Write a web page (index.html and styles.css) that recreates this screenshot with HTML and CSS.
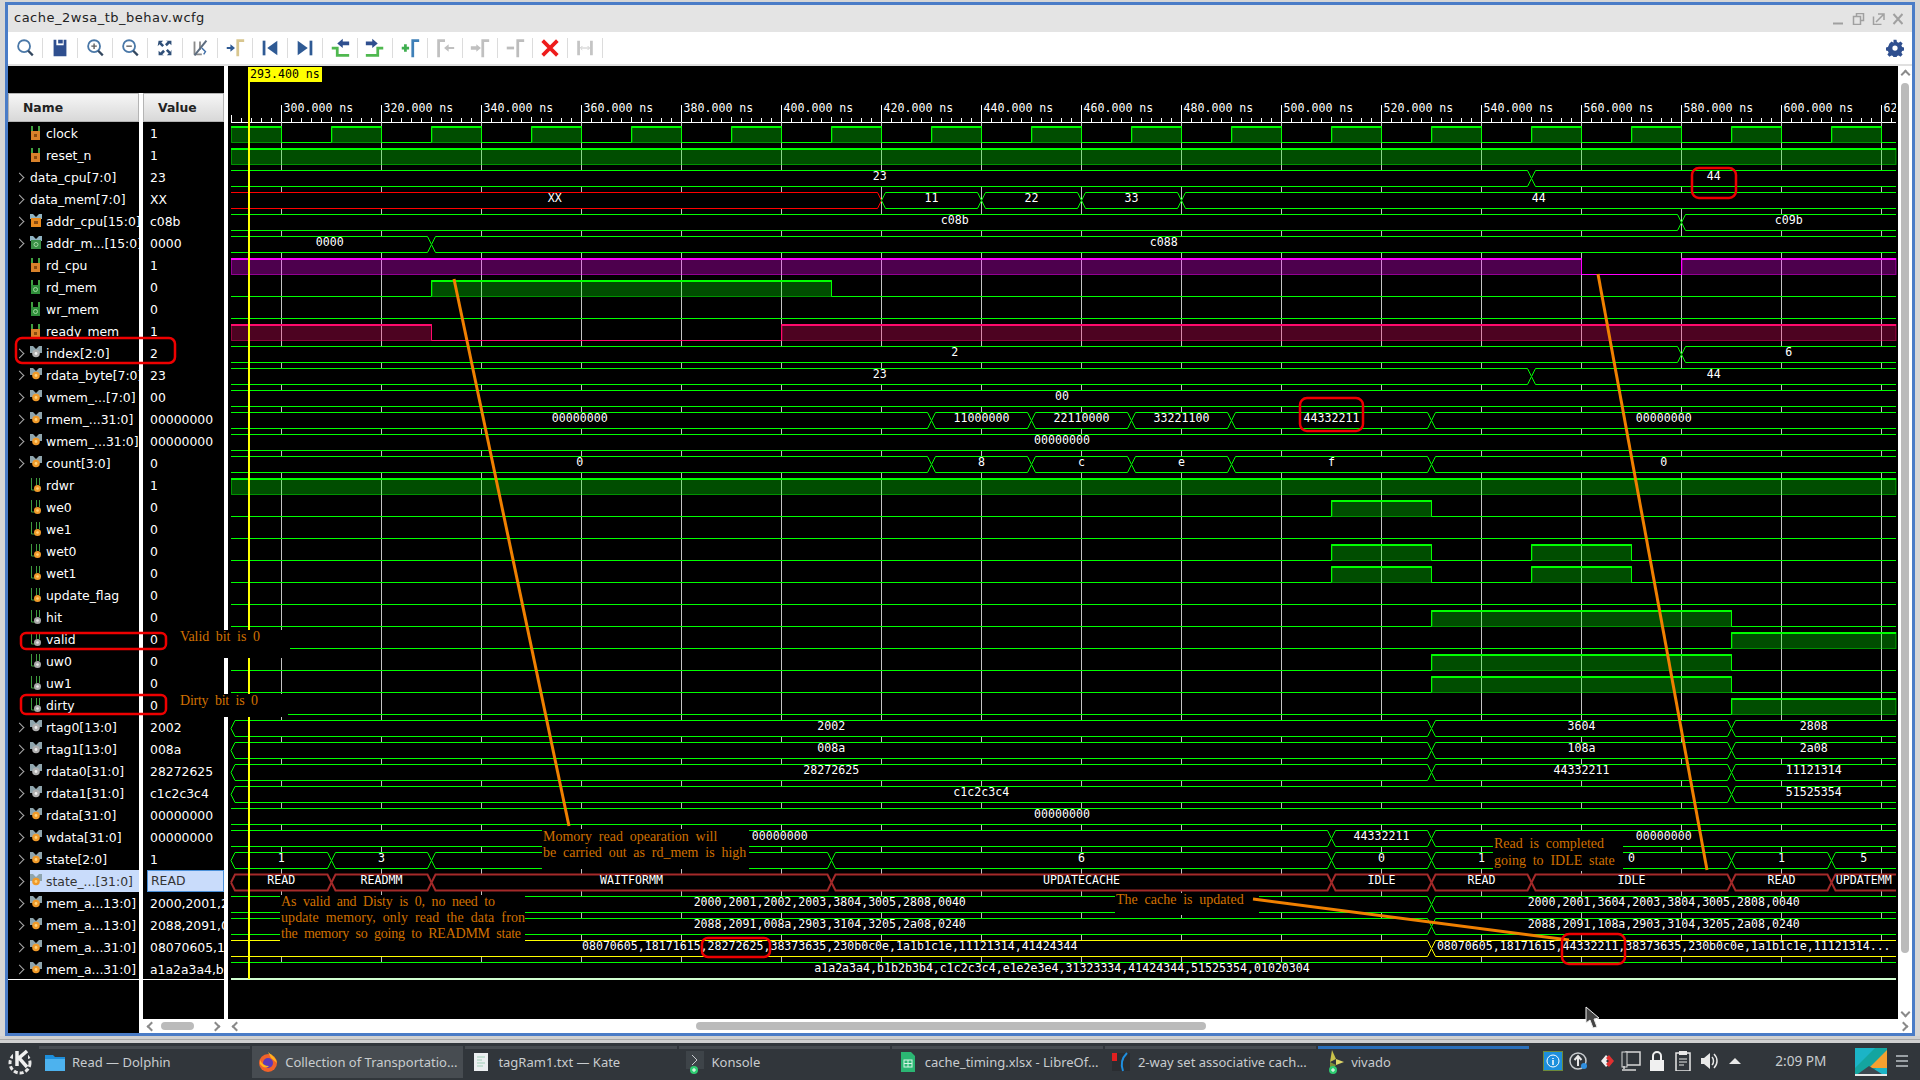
FILE: index.html
```html
<!DOCTYPE html>
<html lang="en">
<head>
    <meta charset="UTF-8">
    <title>cache_2wsa_tb_behav.wcfg</title>
    <link rel="stylesheet" href="styles.css">
</head>
<body>
    <svg class="defs" width="0" height="0">
        <!-- signal icons -->
        <symbol id="logic-in" viewBox="0 0 12 16"><path d="M2 1v6M9 1v6" stroke="#3fa03f" stroke-width="2" fill="none"/><rect x="1" y="6" width="9" height="9" fill="#d9822b"/><rect x="4" y="9" width="3" height="3" fill="#8a4b10"/></symbol>
        <symbol id="logic-out" viewBox="0 0 12 16"><path d="M2 1v6M9 1v6" stroke="#3fa03f" stroke-width="2" fill="none"/><rect x="1" y="6" width="9" height="9" fill="#2f8f3a"/><circle cx="5.500" cy="10.500" r="2" fill="none" stroke="#9fd89f"/></symbol>
        <symbol id="logic-int" viewBox="0 0 12 16"><path d="M1.500 1v12H5M6.500 1v7M9.500 1v7" stroke="#3f9a3f" fill="none"/><circle cx="7.500" cy="11.500" r="3.500" fill="#f09a2a"/><circle cx="7.500" cy="11.500" r="1.300" fill="#ffd27a"/></symbol>
        <symbol id="logic-gray" viewBox="0 0 12 16"><path d="M1.500 1v12H5M6.500 1v7M9.500 1v7" stroke="#3f9a3f" fill="none"/><circle cx="7.500" cy="11.500" r="3.500" fill="#a8a8a8"/><circle cx="7.500" cy="11.500" r="1.300" fill="#e8e8e8"/></symbol>
        <symbol id="bus-in" viewBox="0 0 12 16"><path d="M0 1h3l3 3 3-3h3v5H0z" fill="#8fb3c2"/><rect x="1" y="5" width="10" height="9" fill="#e88a1e"/><rect x="4" y="8" width="4" height="3" fill="#8a4b10"/></symbol>
        <symbol id="bus-out" viewBox="0 0 12 16"><path d="M0 1h3l3 3 3-3h3v5H0z" fill="#8fb3c2"/><rect x="1" y="5" width="10" height="9" fill="#3a8f46"/><circle cx="6" cy="9.500" r="2" fill="none" stroke="#9fd89f"/></symbol>
        <symbol id="bus-int" viewBox="0 0 12 16"><path d="M0 1h3l3 3 3-3h3v7H0z" fill="#8fa5ad"/><circle cx="6" cy="8.500" r="3.800" fill="#f09a2a"/><circle cx="6" cy="8.500" r="1.400" fill="#ffd27a"/></symbol>
        <symbol id="bus-gray" viewBox="0 0 12 16"><path d="M0 1h3l3 3 3-3h3v7H0z" fill="#8fa5ad"/><circle cx="6" cy="8.500" r="3.800" fill="#b0b0b0"/><circle cx="6" cy="8.500" r="1.400" fill="#eee"/></symbol>
    </svg>

    <div class="window">
        <div class="titlebar">
            <span class="title">cache_2wsa_tb_behav.wcfg</span>
            <div class="winbtns">
                <svg width="70" height="12" viewBox="0 0 70 12">
                    <path d="M0 10.500h10" stroke="#a0a0a0" stroke-width="2"/>
                    <path d="M20.500 3.500h7v8h-7zM23.500 3V.5h7v7H28" fill="none" stroke="#a0a0a0" stroke-width="1.500"/>
                    <path d="M40.500 3.500v8h8M43 9l7-7M45 1h6v6" fill="none" stroke="#a0a0a0" stroke-width="1.500"/>
                    <path d="M60.500 1l9 10M69.500 1l-9 10" fill="none" stroke="#a0a0a0" stroke-width="2"/>
                </svg>
            </div>
        </div>

        <div class="toolbar">
            <div class="tool"><svg viewBox="0 0 24 24"><circle cx="11" cy="10" r="6.500" fill="none" stroke="#4a78a8" stroke-width="2"/><path d="M15.500 15l5 5" stroke="#33475f" stroke-width="2.500"/></svg></div>
            <div class="tool"><svg viewBox="0 0 24 24"><path d="M5 3h3v6h8V3h3v18H5z" fill="#2f4f8f"/><rect x="10" y="3" width="5" height="4" fill="#2f4f8f"/></svg></div>
            <div class="tool"><svg viewBox="0 0 24 24"><circle cx="11" cy="10" r="6.500" fill="none" stroke="#4a78a8" stroke-width="2"/><path d="M15.500 15l5 5" stroke="#33475f" stroke-width="2.500"/><path d="M8 10h6M11 7v6" stroke="#5f5f5f" stroke-width="1.500"/></svg></div>
            <div class="tool"><svg viewBox="0 0 24 24"><circle cx="11" cy="10" r="6.500" fill="none" stroke="#4a78a8" stroke-width="2"/><path d="M15.500 15l5 5" stroke="#33475f" stroke-width="2.500"/><path d="M8 10h6" stroke="#5f5f5f" stroke-width="1.500"/></svg></div>
            <div class="tool"><svg viewBox="0 0 24 24"><path d="M5 4h5L8 6l3 3-2 2-3-3-2 2zM19 4v5l-2-2-3 3-2-2 3-3-2-1zM5 20v-5l2 2 3-3 2 2-3 3 2 1zM19 20h-5l2-2-3-3 2-2 3 3 1-2z" fill="#2f4f78"/></svg></div>
            <div class="tool"><svg viewBox="0 0 24 24"><path d="M6 5v14M12 5v9M6 19h8" stroke="#8a8a8a" stroke-width="2" fill="none"/><path d="M19 4L6 20" stroke="#5d6d80" stroke-width="2.200"/><path d="M14 12l4 4-2 3" stroke="#3f6ea8" stroke-width="1.500" fill="none"/></svg></div>
            <div class="tool"><svg viewBox="0 0 24 24"><path d="M3 11h4V8l5 4-5 4v-3H3z" fill="#2f5a94"/><path d="M15 21V4h7" fill="none" stroke="#d8c68f" stroke-width="3"/></svg></div>
            <div class="tool"><svg viewBox="0 0 24 24"><rect x="4" y="4" width="3" height="16" fill="#2f5a94"/><path d="M20 4v16L9 12z" fill="#2f5a94"/></svg></div>
            <div class="tool"><svg viewBox="0 0 24 24"><rect x="17" y="4" width="3" height="16" fill="#2f5a94"/><path d="M4 4v16l11-8z" fill="#2f5a94"/></svg></div>
            <div class="tool"><svg viewBox="0 0 24 24"><path d="M3 12h6v8h13" fill="none" stroke="#4fb84f" stroke-width="3"/><path d="M22 5h-7V2l-6 5 6 5V9h7z" fill="#2f4f8f"/></svg></div>
            <div class="tool"><svg viewBox="0 0 24 24"><path d="M21 12h-6v8H2" fill="none" stroke="#4fb84f" stroke-width="3"/><path d="M2 5h7V2l6 5-6 5V9H2z" fill="#2f4f8f"/></svg></div>
            <div class="tool"><svg viewBox="0 0 24 24"><path d="M3 12h8M7 8v8" stroke="#3fae4f" stroke-width="3"/><path d="M15 22V4h7" fill="none" stroke="#3f80b8" stroke-width="3"/></svg></div>
            <div class="tool"><svg viewBox="0 0 24 24"><path d="M5 22V4h7" fill="none" stroke="#c0c0c0" stroke-width="3"/><path d="M22 11h-6V8l-5 4 5 4v-3h6z" fill="#c0c0c0"/></svg></div>
            <div class="tool"><svg viewBox="0 0 24 24"><path d="M2 10h6V8l5 4-5 4v-2H2z" fill="#c0c0c0"/><path d="M15 22V4h7" fill="none" stroke="#c0c0c0" stroke-width="3"/></svg></div>
            <div class="tool"><svg viewBox="0 0 24 24"><path d="M3 12h8" stroke="#bdbdbd" stroke-width="3"/><path d="M15 22V4h7" fill="none" stroke="#bdbdbd" stroke-width="3"/></svg></div>
            <div class="tool"><svg viewBox="0 0 24 24"><path d="M4 4l16 16M20 4L4 20" stroke="#ee1c1c" stroke-width="4"/></svg></div>
            <div class="tool"><svg viewBox="0 0 24 24"><path d="M5 4v16M19 4v16" stroke="#c4c4c4" stroke-width="3"/><path d="M8 12h8M9 10l-2 2 2 2M15 10l2 2-2 2" stroke="#c4c4c4" fill="none"/></svg></div>
            <div class="tool-right"><svg viewBox="0 0 24 24" width="18" height="18"><path d="M10 1h4l.6 3 2.200.9 2.600-1.700 2.800 2.800-1.700 2.600.9 2.200 3 .6v4l-3 .6-.9 2.200 1.700 2.600-2.800 2.800-2.600-1.700-2.200.9-.6 3h-4l-.6-3-2.200-.9-2.600 1.700-2.800-2.800 1.700-2.600-.9-2.200-3-.6v-4l3-.6.9-2.200L4.600 6l2.800-2.800L10 4.900z" fill="#2f4f8f"/><circle cx="12" cy="12" r="3.500" fill="#fff"/></svg></div>
        </div>

        <div class="panes">
            <div class="col-names">
                <div class="head">Name</div>
                <div class="rows">
                    <div class="row"><span class="chev"></span><span class="cell"><svg class="ic"><use href="#logic-in"/></svg><span>clock</span></span></div>
                    <div class="row"><span class="chev"></span><span class="cell"><svg class="ic"><use href="#logic-in"/></svg><span>reset_n</span></span></div>
                    <div class="row"><span class="chev open"></span><span class="cell"><span>data_cpu[7:0]</span></span></div>
                    <div class="row"><span class="chev open"></span><span class="cell"><span>data_mem[7:0]</span></span></div>
                    <div class="row"><span class="chev open"></span><span class="cell"><svg class="ic"><use href="#bus-in"/></svg><span>addr_cpu[15:0]</span></span></div>
                    <div class="row"><span class="chev open"></span><span class="cell"><svg class="ic"><use href="#bus-out"/></svg><span>addr_m...[15:0]</span></span></div>
                    <div class="row"><span class="chev"></span><span class="cell"><svg class="ic"><use href="#logic-in"/></svg><span>rd_cpu</span></span></div>
                    <div class="row"><span class="chev"></span><span class="cell"><svg class="ic"><use href="#logic-out"/></svg><span>rd_mem</span></span></div>
                    <div class="row"><span class="chev"></span><span class="cell"><svg class="ic"><use href="#logic-out"/></svg><span>wr_mem</span></span></div>
                    <div class="row"><span class="chev"></span><span class="cell"><svg class="ic"><use href="#logic-in"/></svg><span>ready_mem</span></span></div>
                    <div class="row"><span class="chev open"></span><span class="cell"><svg class="ic"><use href="#bus-gray"/></svg><span>index[2:0]</span></span></div>
                    <div class="row"><span class="chev open"></span><span class="cell"><svg class="ic"><use href="#bus-int"/></svg><span>rdata_byte[7:0]</span></span></div>
                    <div class="row"><span class="chev open"></span><span class="cell"><svg class="ic"><use href="#bus-int"/></svg><span>wmem_...[7:0]</span></span></div>
                    <div class="row"><span class="chev open"></span><span class="cell"><svg class="ic"><use href="#bus-int"/></svg><span>rmem_...31:0]</span></span></div>
                    <div class="row"><span class="chev open"></span><span class="cell"><svg class="ic"><use href="#bus-int"/></svg><span>wmem_...31:0]</span></span></div>
                    <div class="row"><span class="chev open"></span><span class="cell"><svg class="ic"><use href="#bus-int"/></svg><span>count[3:0]</span></span></div>
                    <div class="row"><span class="chev"></span><span class="cell"><svg class="ic"><use href="#logic-int"/></svg><span>rdwr</span></span></div>
                    <div class="row"><span class="chev"></span><span class="cell"><svg class="ic"><use href="#logic-int"/></svg><span>we0</span></span></div>
                    <div class="row"><span class="chev"></span><span class="cell"><svg class="ic"><use href="#logic-int"/></svg><span>we1</span></span></div>
                    <div class="row"><span class="chev"></span><span class="cell"><svg class="ic"><use href="#logic-int"/></svg><span>wet0</span></span></div>
                    <div class="row"><span class="chev"></span><span class="cell"><svg class="ic"><use href="#logic-int"/></svg><span>wet1</span></span></div>
                    <div class="row"><span class="chev"></span><span class="cell"><svg class="ic"><use href="#logic-int"/></svg><span>update_flag</span></span></div>
                    <div class="row"><span class="chev"></span><span class="cell"><svg class="ic"><use href="#logic-gray"/></svg><span>hit</span></span></div>
                    <div class="row"><span class="chev"></span><span class="cell"><svg class="ic"><use href="#logic-gray"/></svg><span>valid</span></span></div>
                    <div class="row"><span class="chev"></span><span class="cell"><svg class="ic"><use href="#logic-gray"/></svg><span>uw0</span></span></div>
                    <div class="row"><span class="chev"></span><span class="cell"><svg class="ic"><use href="#logic-gray"/></svg><span>uw1</span></span></div>
                    <div class="row"><span class="chev"></span><span class="cell"><svg class="ic"><use href="#logic-gray"/></svg><span>dirty</span></span></div>
                    <div class="row"><span class="chev open"></span><span class="cell"><svg class="ic"><use href="#bus-gray"/></svg><span>rtag0[13:0]</span></span></div>
                    <div class="row"><span class="chev open"></span><span class="cell"><svg class="ic"><use href="#bus-gray"/></svg><span>rtag1[13:0]</span></span></div>
                    <div class="row"><span class="chev open"></span><span class="cell"><svg class="ic"><use href="#bus-gray"/></svg><span>rdata0[31:0]</span></span></div>
                    <div class="row"><span class="chev open"></span><span class="cell"><svg class="ic"><use href="#bus-gray"/></svg><span>rdata1[31:0]</span></span></div>
                    <div class="row"><span class="chev open"></span><span class="cell"><svg class="ic"><use href="#bus-int"/></svg><span>rdata[31:0]</span></span></div>
                    <div class="row"><span class="chev open"></span><span class="cell"><svg class="ic"><use href="#bus-int"/></svg><span>wdata[31:0]</span></span></div>
                    <div class="row"><span class="chev open"></span><span class="cell"><svg class="ic"><use href="#bus-int"/></svg><span>state[2:0]</span></span></div>
                    <div class="row sel"><span class="chev open"></span><span class="cell"><svg class="ic"><use href="#bus-int"/></svg><span>state_...[31:0]</span></span></div>
                    <div class="row"><span class="chev open"></span><span class="cell"><svg class="ic"><use href="#bus-int"/></svg><span>mem_a...13:0]</span></span></div>
                    <div class="row"><span class="chev open"></span><span class="cell"><svg class="ic"><use href="#bus-int"/></svg><span>mem_a...13:0]</span></span></div>
                    <div class="row"><span class="chev open"></span><span class="cell"><svg class="ic"><use href="#bus-int"/></svg><span>mem_a...31:0]</span></span></div>
                    <div class="row"><span class="chev open"></span><span class="cell"><svg class="ic"><use href="#bus-int"/></svg><span>mem_a...31:0]</span></span></div>
                </div>
            </div>
            <div class="split split-name"></div>
            <div class="col-values">
                <div class="head">Value</div>
                <div class="rows">
                    <div class="val">1</div><div class="val">1</div><div class="val">23</div><div class="val">XX</div>
                    <div class="val">c08b</div><div class="val">0000</div><div class="val">1</div><div class="val">0</div>
                    <div class="val">0</div><div class="val">1</div><div class="val">2</div><div class="val">23</div>
                    <div class="val">00</div><div class="val">00000000</div><div class="val">00000000</div><div class="val">0</div>
                    <div class="val">1</div><div class="val">0</div><div class="val">0</div><div class="val">0</div>
                    <div class="val">0</div><div class="val">0</div><div class="val">0</div><div class="val">0</div>
                    <div class="val">0</div><div class="val">0</div><div class="val">0</div><div class="val">2002</div>
                    <div class="val">008a</div><div class="val">28272625</div><div class="val">c1c2c3c4</div><div class="val">00000000</div>
                    <div class="val">00000000</div><div class="val">1</div><div class="val sel">READ</div>
                    <div class="val">2000,2001,2002,2003</div>
                    <div class="val">2088,2091,008a,2903</div>
                    <div class="val">08070605,18171615</div>
                    <div class="val">a1a2a3a4,b1b2b3b4</div>
                </div>
                <div class="fill"></div>
                <div class="hbar">
                    <span class="arrow left"></span>
                    <span class="track"><span class="thumb thumb-values"></span></span>
                    <span class="arrow right"></span>
                </div>
            </div>
            <div class="split"></div>
            <div class="col-wave">
                <div class="wave-main">
                    <svg id="wave" width="1670" height="953" viewBox="228 66 1670 953"></svg>
                    <div class="vbar">
                        <span class="arrow up"></span>
                        <span class="vthumb"></span>
                        <span class="arrow down"></span>
                    </div>
                </div>
                <div class="hbar">
                    <span class="arrow left"></span>
                    <span class="track"><span class="thumb thumb-wave"></span></span>
                    <span class="arrow right"></span>
                </div>
            </div>
        </div>
    </div>

    <div class="under"></div>

    <div class="taskbar">
        <div class="kde">
            <svg width="28" height="28" viewBox="0 0 28 28">
                <circle cx="14" cy="15" r="10" fill="none" stroke="#e8e8e8" stroke-width="3" stroke-dasharray="4 2"/>
                <rect x="7" y="2" width="15" height="17" fill="#31363b"/>
                <path d="M11 3v15M21 3l-8 7 8 9" fill="none" stroke="#f0f0f0" stroke-width="3.500"/>
            </svg>
        </div>
        <div class="task">
            <svg class="task-ic" viewBox="0 0 20 20"><path d="M0 3h8l2 2h10v14H0z" fill="#1d8fdc"/><rect y="7" width="20" height="12" fill="#4db2ee"/></svg>
            <span>Read — Dolphin</span>
        </div>
        <div class="task active">
            <svg class="task-ic" viewBox="0 0 20 20"><circle cx="10" cy="11" r="9" fill="#f0622a"/><path d="M10 0c4 3 8 6 9 11l-6-5z" fill="#ffb21d"/><circle cx="10" cy="11" r="5" fill="#5b3ab8"/><path d="M2 8c2 4 5 6 9 6-3 3-7 1-9-2z" fill="#ffb21d"/></svg>
            <span>Collection of Transportatio...</span>
        </div>
        <div class="task">
            <svg class="task-ic" viewBox="0 0 20 20"><rect x="3" y="1" width="14" height="18" fill="#eceff1"/><path d="M6 5h8M6 8h5M6 11h8M6 14h6" stroke="#9fd0b8"/></svg>
            <span>tagRam1.txt — Kate</span>
        </div>
        <div class="task">
            <svg class="task-ic" viewBox="0 0 20 24"><rect x="1" y="1" width="18" height="18" fill="#3e4449"/><path d="M7 5l5 5-5 5" fill="none" stroke="#c8cccf"/><circle cx="9" cy="20" r="4" fill="#2ecc71"/><path d="M7 20h4M9 18v4" stroke="#fff"/></svg>
            <span>Konsole</span>
        </div>
        <div class="task">
            <svg class="task-ic" viewBox="0 0 20 20"><path d="M3 0h10l4 4v16H3z" fill="#2bb673"/><rect x="6" y="8" width="8" height="7" fill="none" stroke="#d6f5e5"/><path d="M10 8v7M6 11.500h8" stroke="#d6f5e5"/></svg>
            <span>cache_timing.xlsx - LibreOf...</span>
        </div>
        <div class="task">
            <svg class="task-ic" viewBox="0 0 20 20"><rect x="1" y="1" width="18" height="18" fill="#2a2d31"/><rect x="1" y="1" width="5" height="8" fill="#e02020"/><path d="M16 1c-5 5-7 10-4 18" fill="none" stroke="#1f8fe0" stroke-width="2"/></svg>
            <span>2-way set associative cach...</span>
        </div>
        <div class="task vivado">
            <svg class="task-ic" viewBox="0 0 20 24"><path d="M8 0l4 9-6 3z" fill="#c9c24a"/><path d="M12 9l8 3-8 3z" fill="#e0d86a"/><path d="M6 12l6 3-6 7z" fill="#7f8f3a"/><circle cx="9" cy="20" r="4" fill="#2ecc71"/><path d="M7 20h4M9 18v4" stroke="#fff"/></svg>
            <span>vivado</span>
        </div>
        <div class="tray">
            <svg viewBox="0 0 20 20"><rect width="20" height="20" fill="#6d8a3a"/><rect x="1" y="1" width="18" height="18" fill="#1d8fdc"/><circle cx="10" cy="10" r="6" fill="none" stroke="#fff"/><path d="M10 7v1M10 9v5" stroke="#fff" stroke-width="1.500"/></svg>
            <svg viewBox="0 0 20 20"><circle cx="9" cy="10" r="8" fill="none" stroke="#c8cccf" stroke-width="1.500"/><path d="M9 15V6M5.500 9L9 5l3.500 4" fill="none" stroke="#e8e8e8" stroke-width="2"/><circle cx="15" cy="15" r="3" fill="#2f8fe0"/></svg>
            <svg viewBox="0 0 20 20"><path d="M6 10l5-6 3 3-3 3 3 3-3 3z" fill="#f0f0f0"/><path d="M14 4l5 6-5 6-3-3 3-3-3-3z" fill="#e03030"/></svg>
            <svg viewBox="0 0 20 20"><rect x="5" y="1" width="14" height="13" fill="none" stroke="#d8d8d8" stroke-width="1.500"/><rect x="1" y="1" width="5" height="15" fill="#31363b" stroke="#d8d8d8"/><path d="M3 18v-3M1 19h14" stroke="#d8d8d8" stroke-width="1.500"/></svg>
            <svg viewBox="0 0 20 20"><rect x="3" y="9" width="14" height="11" fill="#f0f0f0"/><path d="M6 9V5a4 4 0 018 0v4" fill="none" stroke="#f0f0f0" stroke-width="2"/></svg>
            <svg viewBox="0 0 20 20"><rect x="3" y="2" width="14" height="18" fill="none" stroke="#e8e8e8" stroke-width="1.500"/><rect x="6" y="0" width="8" height="4" fill="#e8e8e8"/><path d="M6 8h8M6 11h8M6 14h5" stroke="#e8e8e8"/></svg>
            <svg viewBox="0 0 20 20"><path d="M2 7h3l6-5v16l-6-5H2z" fill="#e8e8e8"/><path d="M13 6c2 2 2 6 0 8M15 3c4 4 4 10 0 14" fill="none" stroke="#e8e8e8" stroke-width="1.500"/></svg>
            <svg viewBox="0 0 20 20"><path d="M4 13l6-6 6 6z" fill="#e8e8e8"/></svg>
        </div>
        <div class="clock">2:09 PM</div>
        <svg class="pager" viewBox="0 0 32 28"><rect width="32" height="28" fill="#1bb4c6"/><path d="M0 20L20 0h12v8L14 28H0z" fill="#14a5a0"/><path d="M32 2v18H14z" fill="#f5a030"/><path d="M0 28l14-10 16 10z" fill="#3d4850"/><rect y="26" width="32" height="2" fill="#e8e8e8"/></svg>
        <div class="burger"><span></span><span></span><span></span></div>
    </div>

    <!-- notes drawn on top of the screenshot -->
    <svg class="notes" width="1920" height="1080" viewBox="0 0 1920 1080">
        <rect class="patch" x="170" y="630" width="120" height="28"/>
        <rect class="patch" x="170" y="694" width="118" height="23"/>
        <rect class="patch" x="542" y="829" width="207" height="40"/>
        <rect class="patch" x="280" y="895" width="245" height="49"/>
        <rect class="patch" x="1493" y="836" width="130" height="35"/>
        <rect class="patch" x="1115" y="893" width="144" height="22"/>

        <line class="arrow-line" x1="454" y1="279" x2="569" y2="826"/>
        <line class="arrow-line" x1="1598" y1="274" x2="1707" y2="870"/>
        <line class="arrow-line" x1="1253" y1="899" x2="1569" y2="940"/>

        <rect class="mark" x="16" y="338" width="159" height="25" rx="6"/>
        <rect class="mark" x="21" y="633" width="145" height="16" rx="5"/>
        <rect class="mark" x="21" y="695" width="145" height="19" rx="5"/>
        <rect class="mark" x="1692" y="168" width="44" height="30" rx="7"/>
        <rect class="mark" x="1300" y="398" width="63" height="33" rx="7"/>
        <rect class="mark" x="702" y="938" width="68" height="19" rx="6"/>
        <rect class="mark" x="1562" y="934" width="63" height="30" rx="7"/>

        <text class="note" x="180" y="641" textLength="80">Valid bit is 0</text>
        <text class="note" x="180" y="705" textLength="78">Dirty bit is 0</text>
        <text class="note" x="543" y="841">Momory read opearation will</text>
        <text class="note" x="543" y="857">be carried out as rd_mem is high</text>
        <text class="note" x="281" y="906" textLength="214">As valid and Disty is 0, no need to</text>
        <text class="note" x="281" y="922" textLength="244">update memory, only read the data fron</text>
        <text class="note" x="281" y="938" textLength="240">the memory so going to READMM state</text>
        <text class="note" x="1494" y="848">Read is completed</text>
        <text class="note" x="1494" y="865">going to IDLE state</text>
        <text class="note" x="1116" y="904">The cache is updated</text>

        <path class="pointer" d="M1586 1007l0 16 4-3 3 8 4-1-3-8 5-1z"/>
    </svg>

    <script src="wave.js"></script>
</body>
</html>
```

FILE: styles.css
```css
html, body {
    margin: 0;
    padding: 0;
}
body {
    width: 1920px;
    height: 1080px;
    overflow: hidden;
    position: relative;
    background-color: #d6d6d6;
    padding-top: 2px;
    box-sizing: border-box;
    font-family: "DejaVu Sans", sans-serif;
    font-size: 12.4px;
}
.defs {
    position: absolute;
}
.window {
    height: 1034px;
    margin: 0 5px;
    box-sizing: border-box;
    border: 3px solid #4a7cc7;
    background-color: #fff;
    display: flex;
    flex-direction: column;
}
.titlebar {
    height: 27px;
    flex: none;
    box-sizing: border-box;
    background-color: #e4e4e4;
    display: flex;
    align-items: center;
    justify-content: space-between;
    padding: 0 9px 2px 6px;
}
.title {
    font-size: 13px;
    letter-spacing: 0.5px;
    color: #222;
}
.winbtns {
    display: flex;
    padding-top: 2px;
}
.toolbar {
    height: 32px;
    flex: none;
    display: flex;
    align-items: center;
    border-bottom: 2px solid #e0e0e0;
    box-sizing: content-box;
}
.tool {
    width: 35px;
    height: 20px;
    flex: none;
    box-sizing: border-box;
    border-right: 1px solid #dcdcdc;
    display: flex;
    align-items: center;
    justify-content: center;
}
.tool svg {
    width: 22px;
    height: 22px;
    flex: none;
}
.tool-right {
    margin-left: auto;
    margin-right: 8px;
    display: flex;
}
.panes {
    flex: 1;
    min-height: 0;
    display: flex;
    background-color: #000;
}
.col-names {
    width: 131px;
    flex: none;
    padding-top: 27px;
}
.col-values {
    width: 81px;
    flex: none;
    padding-top: 27px;
    display: flex;
    flex-direction: column;
}
.col-wave {
    flex: 1;
    display: flex;
    flex-direction: column;
    min-width: 0;
}
.split {
    width: 4px;
    flex: none;
    background-color: #fff;
}
.split-name {
    margin-top: 27px;
}
.head {
    height: 29px;
    box-sizing: border-box;
    border: 1px solid #b4b4b4;
    background: linear-gradient(#f6f6f6, #d8d8d8);
    font-weight: bold;
    font-size: 12.4px;
    color: #222;
    display: flex;
    align-items: center;
    padding-left: 14px;
}
.rows {
    height: 858px;
    overflow: hidden;
    box-shadow: inset 0 -1px 0 #fff;
    color: #fff;
}
.row {
    height: 22px;
    display: flex;
    align-items: center;
    padding-left: 9px;
}
.chev {
    width: 13px;
    height: 22px;
    flex: none;
    display: flex;
    align-items: center;
}
.chev.open::before {
    content: "";
    width: 6px;
    height: 6px;
    margin-left: -1px;
    border-top: 1px solid #aaa;
    border-right: 1px solid #aaa;
    transform: rotate(45deg);
}
.cell {
    flex: 1;
    min-width: 0;
    height: 22px;
    display: flex;
    align-items: center;
    white-space: nowrap;
    overflow: hidden;
}
.ic {
    width: 12px;
    height: 16px;
    flex: none;
    margin-right: 4px;
}
.row.sel .cell {
    background-color: #c9dcfb;
    color: #333;
}
.val {
    height: 22px;
    line-height: 23px;
    padding-left: 7px;
    white-space: nowrap;
    overflow: hidden;
}
.val.sel {
    margin-left: 4px;
    padding-left: 3px;
    box-sizing: border-box;
    border: 1px solid #4a90d9;
    line-height: 20px;
    background-color: #c9dcfb;
    color: #333;
}
.fill {
    flex: 1;
}
#wave {
    flex: none;
    display: block;
}
.wave-main {
    flex: 1;
    min-height: 0;
    display: flex;
}
.wv-text {
    font-family: "DejaVu Sans Mono", monospace;
    font-size: 11.6px;
    fill: #fff;
}
.wv-text.mid {
    text-anchor: middle;
}
.wv-cursor {
    fill: #000;
}
.vbar {
    flex: 1;
    background-color: #fff;
    display: flex;
    flex-direction: column;
    align-items: center;
    justify-content: space-between;
    padding: 5px 0 3px;
    box-sizing: border-box;
}
.vthumb {
    width: 8px;
    flex: 1;
    margin: 5px 0 56px;
    border-radius: 4px;
    background-color: #bbb;
}
.hbar {
    height: 14px;
    flex: none;
    background-color: #fff;
    display: flex;
    align-items: center;
    padding: 0 2px;
    box-sizing: border-box;
}
.track {
    flex: 1;
    display: flex;
    align-items: center;
}
.thumb {
    height: 8px;
    border-radius: 4px;
    background-color: #bbb;
}
.thumb-values {
    width: 33px;
    margin-left: 3px;
}
.thumb-wave {
    width: 510px;
    margin-left: 453px;
}
.arrow {
    width: 5px;
    height: 5px;
    margin: 0 3px;
    flex: none;
    border-top: 2px solid #8a8a8a;
    border-right: 2px solid #8a8a8a;
}
.arrow.left {
    transform: rotate(-135deg);
}
.arrow.right {
    transform: rotate(45deg);
}
.arrow.up {
    transform: rotate(-45deg);
}
.arrow.down {
    transform: rotate(135deg);
}
.under {
    height: 7px;
    background: linear-gradient(#d0d0d0 0, #d0d0d0 40%, #a8a8a8 40%, #a8a8a8 60%, #d0d0d0 60%);
}
.taskbar {
    height: 37px;
    background-color: #31363b;
    display: flex;
    align-items: flex-start;
    color: #c8cccf;
    font-family: "Noto Sans", sans-serif;
    font-size: 13px;
}
.kde {
    width: 39px;
    height: 37px;
    flex: none;
    display: flex;
    align-items: center;
    justify-content: center;
}
.task {
    width: 211.2px;
    height: 32px;
    flex: none;
    margin: 3px 2px 0 0;
    padding: 0 0 3px 6px;
    box-sizing: border-box;
    border-top: 3px solid #474c51;
    display: flex;
    align-items: center;
    gap: 7px;
    white-space: nowrap;
    overflow: hidden;
}
.task.active {
    background-color: #474c51;
}
.task.vivado {
    border-top-color: #2a6fba;
}
.task-ic {
    width: 20px;
    height: 24px;
    flex: none;
}
.tray {
    display: flex;
    align-items: center;
    height: 35px;
    margin-left: 9px;
    flex: none;
}
.tray svg {
    width: 20px;
    height: 20px;
    margin: 0 3px;
    flex: none;
}
.clock {
    margin-left: 27px;
    height: 37px;
    line-height: 36px;
    font-size: 13.6px;
    flex: none;
}
.pager {
    width: 32px;
    height: 28px;
    margin: 5px 0 0 29px;
    flex: none;
}
.burger {
    width: 12px;
    height: 35px;
    margin-left: 9px;
    flex: none;
    display: flex;
    flex-direction: column;
    justify-content: center;
    gap: 3px;
}
.burger span {
    height: 2px;
    background-color: #9aa0a5;
}
.notes {
    position: absolute;
    left: 0;
    top: 0;
    pointer-events: none;
}
.patch {
    fill: #000;
}
.arrow-line {
    stroke: #f08000;
    stroke-width: 3;
}
.mark {
    fill: none;
    stroke: #ee0000;
    stroke-width: 2.5;
}
.note {
    font-family: "Liberation Serif", serif;
    font-size: 14px;
    word-spacing: 3.3px;
    fill: #d07000;
}
.pointer {
    fill: #444;
    stroke: #eee;
    stroke-width: 1;
}
```

FILE: wave.js
```js
// waveform drawing. times are in ns, 5px per ns
const LEFT = 231, RIGHT = 1896;
const GREEN = '#00ff00', RED = '#ff0000', YELLOW = '#ffff00', MAGENTA = '#ff00ff', PINK = '#ff0a6c', BROWN = '#a52a2a';

function px(t) {
    return Math.floor(381.67 + (t - 320) * 5) + 0.5;
}

function logic(color, high, edges) {
    return { type: 'logic', color, high, edges };
}

// edges are the transition times, labels has one entry more. opened = the bus starts with a < shape
function bus(color, edges, labels, opened) {
    return { type: 'bus', color, edges, labels, opened };
}

const clockEdges = [];
for (let t = 300; t <= 620; t += 10) clockEdges.push(t);

const stateEdges = [310, 330, 410, 510, 530, 550, 590, 610];

const rows = [
    logic(GREEN, true, clockEdges),
    logic(GREEN, true, []),
    bus(GREEN, [550], ['23', '44']),
    bus([RED, GREEN, GREEN, GREEN, GREEN], [420, 440, 460, 480], ['XX', '11', '22', '33', '44']),
    bus(GREEN, [580], ['c08b', 'c09b']),
    bus(GREEN, [330], ['0000', 'c088']),
    logic(MAGENTA, true, [560, 580]),
    logic(GREEN, false, [330, 410]),
    logic(GREEN, false, []),
    logic(PINK, true, [330, 400]),
    bus(GREEN, [580], ['2', '6']),
    bus(GREEN, [550], ['23', '44']),
    bus(GREEN, [], ['00']),
    bus(GREEN, [430, 450, 470, 490, 530], ['00000000', '11000000', '22110000', '33221100', '44332211', '00000000']),
    bus(GREEN, [], ['00000000']),
    bus(GREEN, [430, 450, 470, 490, 530], ['0', '8', 'c', 'e', 'f', '0']),
    logic(GREEN, true, []),
    logic(GREEN, false, [510, 530]),
    logic(GREEN, false, []),
    logic(GREEN, false, [510, 530, 550, 570]),
    logic(GREEN, false, [510, 530, 550, 570]),
    logic(GREEN, false, []),
    logic(GREEN, false, [530, 590]),
    logic(GREEN, false, [590]),
    logic(GREEN, false, [530, 590]),
    logic(GREEN, false, [530, 590]),
    logic(GREEN, false, [590]),
    bus(GREEN, [530, 590], ['2002', '3604', '2808'], true),
    bus(GREEN, [530, 590], ['008a', '108a', '2a08'], true),
    bus(GREEN, [530, 590], ['28272625', '44332211', '11121314'], true),
    bus(GREEN, [590], ['c1c2c3c4', '51525354'], true),
    bus(GREEN, [], ['00000000']),
    bus(GREEN, [510, 530], ['00000000', '44332211', '00000000']),
    bus(GREEN, stateEdges, ['1', '3', '', '6', '0', '1', '0', '1', '5'], true),
    bus(BROWN, stateEdges, ['READ', 'READMM', 'WAITFORMM', 'UPDATECACHE', 'IDLE', 'READ', 'IDLE', 'READ', 'UPDATEMM'], true),
    bus(GREEN, [530], ['2000,2001,2002,2003,3804,3005,2808,0040', '2000,2001,3604,2003,3804,3005,2808,0040']),
    bus(GREEN, [530], ['2088,2091,008a,2903,3104,3205,2a08,0240', '2088,2091,108a,2903,3104,3205,2a08,0240']),
    bus(YELLOW, [530], ['08070605,18171615,28272625,38373635,230b0c0e,1a1b1c1e,11121314,41424344', '08070605,18171615,44332211,38373635,230b0c0e,1a1b1c1e,11121314...']),
    bus(GREEN, [], ['a1a2a3a4,b1b2b3b4,c1c2c3c4,e1e2e3e4,31323334,41424344,51525354,01020304'])
];

let out = '<defs><clipPath id="wave-clip"><rect x="228" y="66" width="1668" height="953"/></clipPath></defs>';

// time axis
out += `<path d="M${LEFT} 122.5H${RIGHT}" stroke="#fff"/>`;
out += `<path d="M${LEFT + 0.5} 115V122" stroke="#fff"/>`;
for (let t = 292; t <= 622; t += 2) {
    const top = t % 20 === 0 ? 105 : t % 10 === 0 ? 117 : 118;
    out += `<path d="M${px(t)} ${top}V122" stroke="#fff"/>`;
}
out += '<g clip-path="url(#wave-clip)">';
for (let t = 300; t <= 620; t += 20) {
    out += `<text class="wv-text" x="${px(t) + 2}" y="112">${t}.000 ns</text>`;
}
out += '</g>';

// grid
for (let t = 300; t <= 620; t += 20) {
    out += `<path d="M${px(t)} 122V962" stroke="#c4c4c4"/>`;
}

rows.forEach((row, i) => {
    const top = 126 + 22 * i;
    if (row.type === 'logic') out += drawLogic(row, top);
    else out += drawBus(row, top);
});

// bottom edge of the list
out += `<rect x="${LEFT}" y="978" width="${RIGHT - LEFT}" height="2" fill="#d0ffd0"/>`;

// cursor
out += '<rect x="248" y="82" width="2" height="897" fill="#ffff00"/>';
out += '<rect x="248" y="67" width="74" height="15" fill="#ffff00"/>';
out += '<text class="wv-text wv-cursor" x="250" y="78">293.400 ns</text>';

document.getElementById('wave').innerHTML = out;

function drawLogic(row, top) {
    const y1 = top + 0.5, y0 = top + 16.5;
    let s = '', level = row.high, x = LEFT, line = `M${LEFT} ${level ? y1 : y0}`;
    const ends = row.edges.map(px).concat([RIGHT]);
    ends.forEach((end) => {
        if (level) {
            s += `<rect x="${x + 0.5}" y="${y1}" width="${end - x - 0.5}" height="16" fill="${row.color}" fill-opacity="0.3" stroke="${row.color}" stroke-opacity="0.5"/>`;
            s += `<rect x="${x}" y="${top}" width="${end - x}" height="2" fill="${row.color}"/>`;
        }
        line += `H${end}`;
        if (end !== RIGHT) {
            level = !level;
            line += `V${level ? y1 : y0}`;
        }
        x = end;
    });
    return s + `<path d="${line}" fill="none" stroke="${row.color}"/>`;
}

function drawBus(row, top) {
    const y1 = top + 0.5, y0 = top + 16.5, mid = top + 8.5, slant = 4;
    const ends = row.edges.map(px).concat([RIGHT]);
    const width = row.color === BROWN ? 2 : 1;
    let s = '', x = LEFT;
    ends.forEach((end, k) => {
        const color = Array.isArray(row.color) ? row.color[k] : row.color;
        const hasLeft = k > 0 || row.opened;
        const hasRight = end !== RIGHT;
        const leftX = hasLeft ? x + slant : x;
        const rightX = hasRight ? end - slant : end;
        // black body hides the grid, the outline goes over it
        const leftTip = hasLeft ? `L${x} ${mid}` : '';
        const rightTip = hasRight ? `L${end} ${mid}` : '';
        s += `<path d="M${leftX} ${y1}L${rightX} ${y1}${rightTip}L${rightX} ${y0}L${leftX} ${y0}${leftTip}Z" fill="#000"/>`;
        let d = hasLeft ? `M${x} ${mid}L${leftX} ${y1}` : `M${x} ${y1}`;
        d += `H${rightX}`;
        d += hasRight ? `L${end} ${mid}L${rightX} ${y0}` : `M${end} ${y0}`;
        d += `H${leftX}`;
        if (hasLeft) d += `L${x} ${mid}`;
        s += `<path d="${d}" fill="none" stroke="${color}" stroke-width="${width}"/>`;
        // the first value is centred from the edge of the pane
        const from = k === 0 && !row.opened ? 228 : x;
        if (row.labels[k]) s += `<text class="wv-text mid" x="${(from + end) / 2}" y="${top + 10}">${row.labels[k]}</text>`;
        x = end;
    });
    return s;
}
```
